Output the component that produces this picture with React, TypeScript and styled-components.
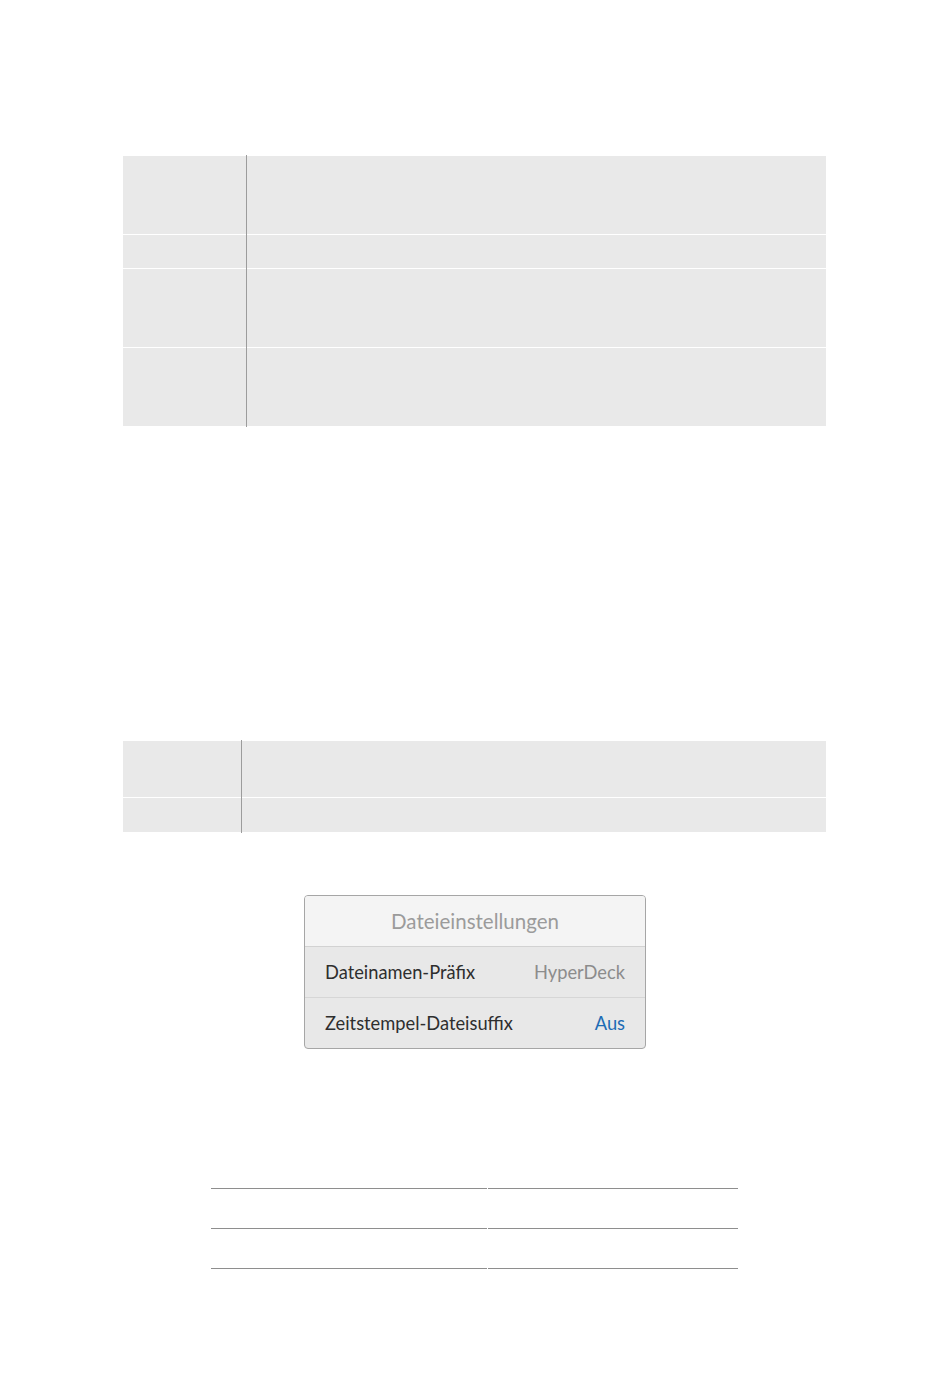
import styled, { createGlobalStyle } from 'styled-components';

const GlobalStyle = createGlobalStyle`
  html, body {
    margin: 0;
    padding: 0;
    background: #ffffff;
    font-family: Lato, 'Open Sans', sans-serif;
  }
`;

const Page = styled.main`
  width: 950px;
  min-height: 1387px;
  padding-top: 156px;
  box-sizing: border-box;
  display: flex;
  flex-direction: column;
`;

const ShadedTable = styled.div<{ $left: number; $width: number; $top?: number }>`
  margin-left: ${(p) => p.$left}px;
  margin-top: ${(p) => p.$top ?? 0}px;
  width: ${(p) => p.$width}px;
  display: flex;
  flex-direction: column;
  gap: 1px;
  background: #ffffff;
`;

const ShadedRow = styled.div<{ $height: number; $key: number }>`
  display: grid;
  grid-template-columns: ${(p) => p.$key}px 1px 1fr;
  height: ${(p) => p.$height}px;
  background: #e9e9e9;
`;

const Divider = styled.div`
  background: #9c9c9c;
  margin-top: -1px;
  margin-bottom: -1px;
  position: relative;
`;

const Cell = styled.div``;

const Dialog = styled.section`
  margin: 63px 0 0 304px;
  width: 342px;
  border: 1px solid #a6a6a6;
  border-radius: 4px;
  overflow: hidden;
  box-sizing: border-box;
  background: #e8e8e8;
`;

const DialogTitle = styled.header`
  height: 50px;
  display: flex;
  align-items: center;
  justify-content: center;
  background: #f4f4f4;
  border-bottom: 1px solid #d2d2d2;
  color: #9b9b9b;
  font-size: 20.5px;
`;

const SettingRow = styled.div<{ $last?: boolean }>`
  height: 50px;
  display: flex;
  align-items: center;
  justify-content: space-between;
  padding: 0 20px 0 20px;
  border-bottom: ${(p) => (p.$last ? 'none' : '1px solid #d6d6d6')};
  font-size: 18.3px;
`;

const SettingLabel = styled.span`
  color: #2e2e2e;
`;

const SettingValue = styled.span<{ $accent?: boolean }>`
  color: ${(p) => (p.$accent ? '#1d6cb5' : '#8c8c8c')};
`;

const RuleTable = styled.div`
  margin: 139px 0 0 211px;
  width: 527px;
  display: grid;
  grid-template-columns: 276px 1fr;
  column-gap: 1px;
`;

const RuleCell = styled.div<{ $first?: boolean }>`
  height: 39px;
  border-top: ${(p) => (p.$first ? '1px solid #8e8e8e' : 'none')};
  border-bottom: 1px solid #8e8e8e;
`;

const firstRows = [78, 33, 78, 78];
const secondRows = [56, 34];

export default function App() {
  return (
    <Page>
      <GlobalStyle />
      <ShadedTable $left={123} $width={703}>
        {firstRows.map((h, i) => (
          <ShadedRow key={i} $height={h} $key={123}>
            <Cell />
            <Divider />
            <Cell />
          </ShadedRow>
        ))}
      </ShadedTable>

      <ShadedTable $left={123} $width={703} $top={315}>
        {secondRows.map((h, i) => (
          <ShadedRow key={i} $height={h} $key={118}>
            <Cell />
            <Divider />
            <Cell />
          </ShadedRow>
        ))}
      </ShadedTable>

      <Dialog>
        <DialogTitle>Dateieinstellungen</DialogTitle>
        <SettingRow>
          <SettingLabel>Dateinamen-Präfix</SettingLabel>
          <SettingValue>HyperDeck</SettingValue>
        </SettingRow>
        <SettingRow $last>
          <SettingLabel>Zeitstempel-Dateisuffix</SettingLabel>
          <SettingValue $accent>Aus</SettingValue>
        </SettingRow>
      </Dialog>

      <RuleTable>
        <RuleCell $first />
        <RuleCell $first />
        <RuleCell />
        <RuleCell />
      </RuleTable>
    </Page>
  );
}
